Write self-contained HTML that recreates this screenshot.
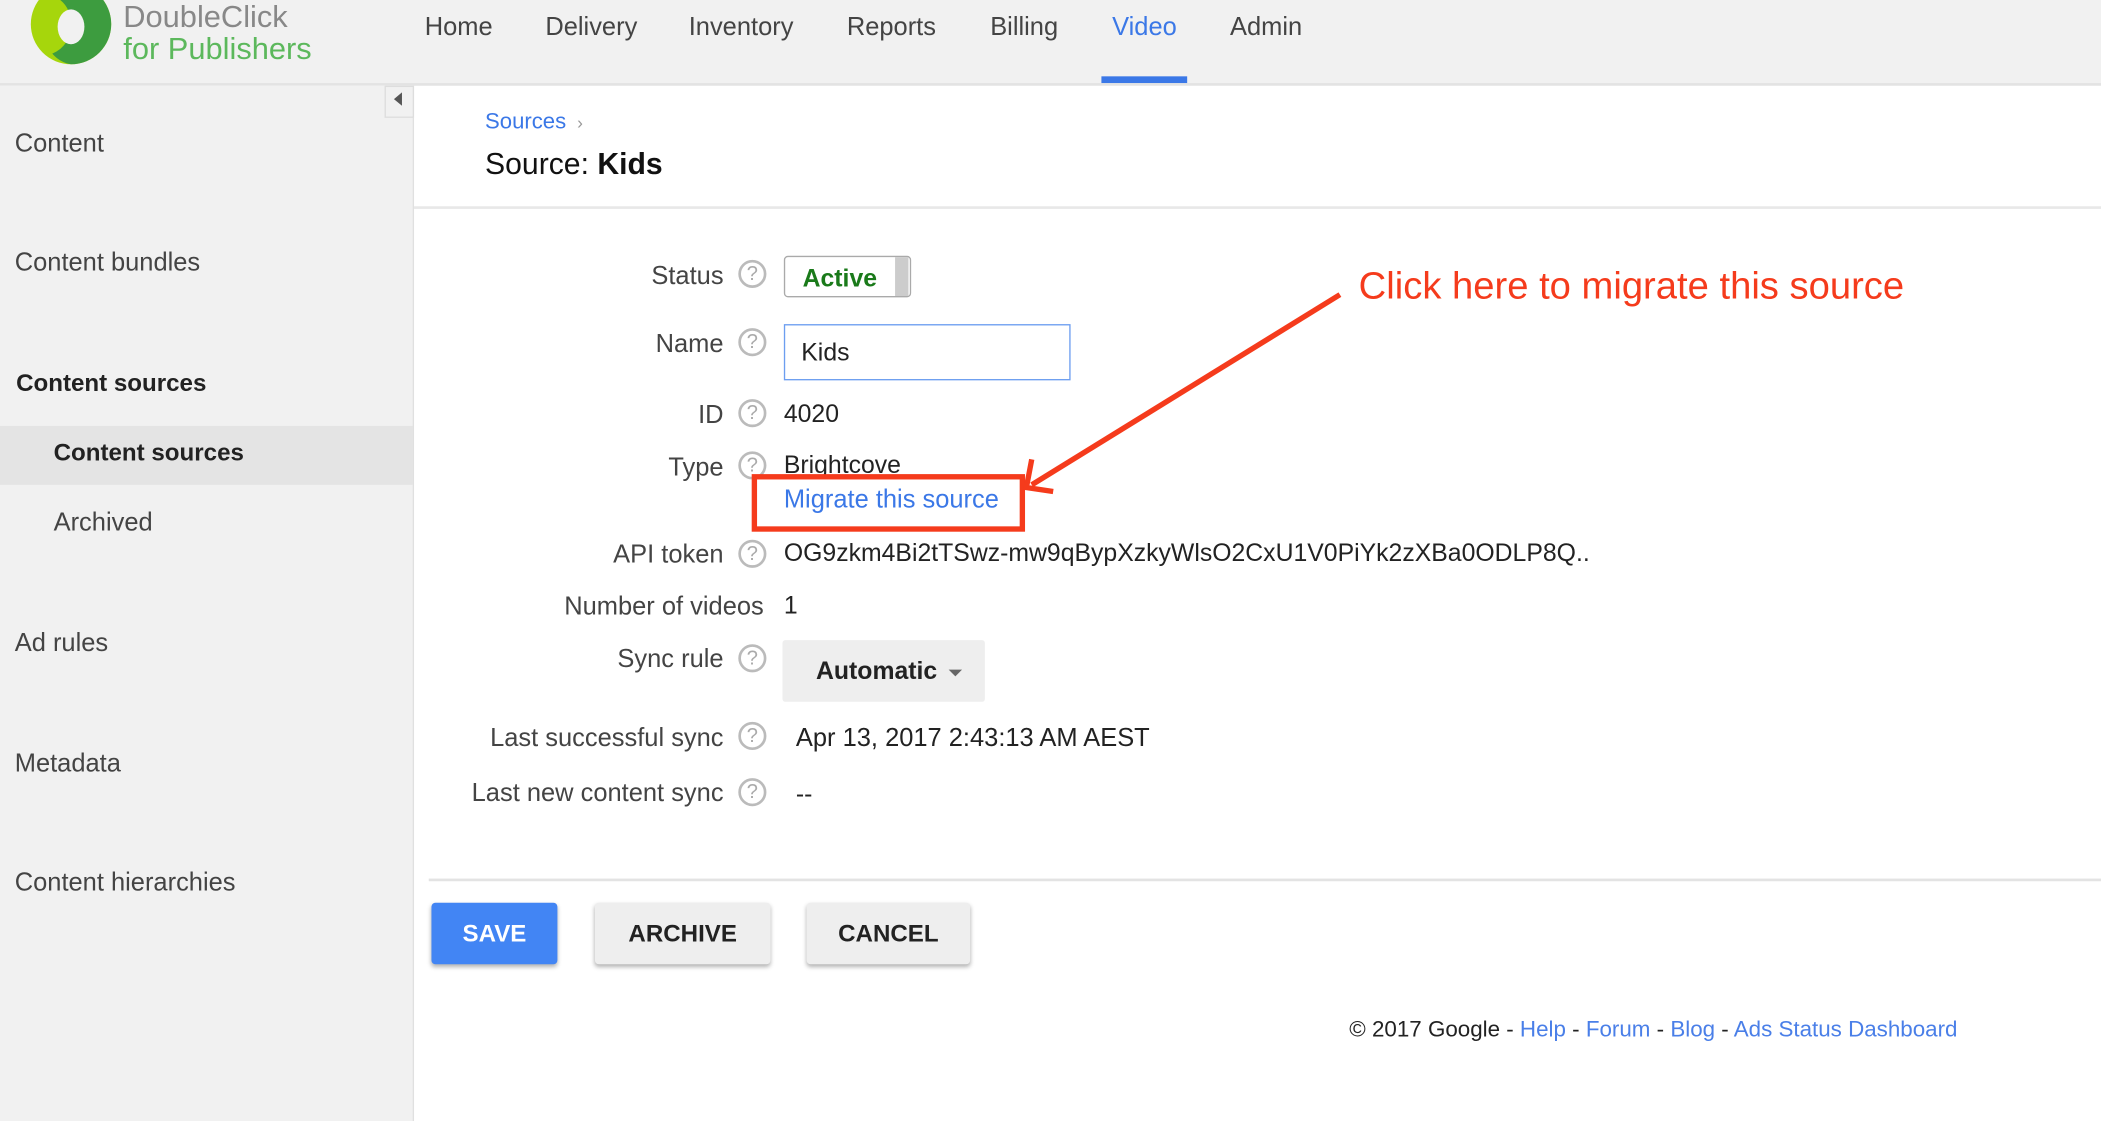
<!DOCTYPE html>
<html><head><meta charset="utf-8"><style>
html,body{margin:0;padding:0;width:2101px;height:1121px;overflow:hidden;background:#fff;font-family:"Liberation Sans",Arial,sans-serif}
#w{position:absolute;left:0;top:0;width:1568px;height:837px;transform:scale(1.33992,1.3393);transform-origin:0 0;background:#fff}
.a{position:absolute;white-space:nowrap}
.nav{font-size:19px;color:#444;top:10px}
.sb{font-size:19px;color:#444;left:11px}
.lb{font-size:19px;color:#444;text-align:right;right:1028px}
.v{font-size:18.5px;color:#222;left:585px}
.q{position:absolute;left:551px;width:17px;height:17px;border:2px solid #bbb;border-radius:50%;color:#aaa;font-size:15px;text-align:center;line-height:18px}
.btn{position:absolute;top:674px;height:46px;border-radius:3px;font-size:18px;font-weight:bold;text-align:center;line-height:46px;box-shadow:0 2px 3px rgba(0,0,0,.3)}
.lk{color:#4a7fe8}
</style></head><body><div id="w">
<div class="a" style="left:0;top:0;width:1568px;height:62px;background:#f1f1f1;border-bottom:2px solid #e3e3e3"></div>
<svg class="a" style="left:20px;top:-14px" width="66" height="64" viewBox="0 0 66 64"><circle cx="33" cy="32" r="30" fill="#a6d60c"/><path d="M33 2a30 30 0 0 1 0 60a24 24 0 0 1-14-8a22 22 0 0 0 14-22a22 22 0 0 0-8-18a24 24 0 0 1 8-12z" fill="#3d9c3f"/><ellipse cx="33" cy="34" rx="10" ry="13" fill="#f1f1f1"/></svg>
<div class="a" style="left:92px;top:0;font-size:23px;color:#888;line-height:24px">DoubleClick</div>
<div class="a" style="left:92px;top:24px;font-size:23px;color:#5cb85c;line-height:24px">for Publishers</div>
<div class="a nav" style="left:317px">Home</div>
<div class="a nav" style="left:407px">Delivery</div>
<div class="a nav" style="left:514px">Inventory</div>
<div class="a nav" style="left:632px">Reports</div>
<div class="a nav" style="left:739px">Billing</div>
<div class="a nav" style="left:830px;color:#3b78e7">Video</div>
<div class="a" style="left:822px;top:57px;width:64px;height:5px;background:#3b78e7"></div>
<div class="a nav" style="left:918px">Admin</div>

<div class="a" style="left:0;top:64px;width:308px;height:773px;background:#f1f1f1;border-right:1px solid #e0e0e0"></div>
<div class="a" style="left:287px;top:64px;width:20px;height:22px;border:1px solid #ddd;background:#f1f1f1"></div>
<div class="a" style="left:294px;top:69px;width:0;height:0;border-top:5px solid transparent;border-bottom:5px solid transparent;border-right:6px solid #555"></div>
<div class="a sb" style="top:97px">Content</div>
<div class="a sb" style="top:186px">Content bundles</div>
<div class="a sb" style="top:276px;left:12px;font-weight:bold;color:#222;font-size:18px">Content sources</div>
<div class="a" style="left:0;top:318px;width:308px;height:44px;background:#e4e4e4"></div>
<div class="a sb" style="top:328px;left:40px;font-weight:bold;color:#222;font-size:18px">Content sources</div>
<div class="a sb" style="top:380px;left:40px">Archived</div>
<div class="a sb" style="top:470px">Ad rules</div>
<div class="a sb" style="top:560px">Metadata</div>
<div class="a sb" style="top:649px">Content hierarchies</div>

<div class="a" style="left:362px;top:82px;font-size:16.5px;color:#3b78e7">Sources <span style="color:#999;font-size:13px">&nbsp;›</span></div>
<div class="a" style="left:362px;top:110px;font-size:22.5px;color:#111">Source: <b>Kids</b></div>
<div class="a" style="left:309px;top:154px;width:1259px;height:2px;background:#e8e8e8"></div>

<div class="a lb" style="top:196px">Status</div><div class="q" style="top:194px">?</div>
<div class="a" style="left:585px;top:191px;width:93px;height:29px;border:1px solid #aaa;border-radius:3px"></div>
<div class="a" style="left:668px;top:192px;width:10px;height:29px;background:#ccc"></div>
<div class="a" style="left:599px;top:197px;font-size:18.5px;font-weight:bold;color:#1a7a1a">Active</div>
<div class="a lb" style="top:247px">Name</div><div class="q" style="top:245px">?</div>
<div class="a" style="left:585px;top:242px;width:212px;height:40px;border:1px solid #6c9ef0"></div>
<div class="a v" style="left:598px;top:252px">Kids</div>
<div class="a lb" style="top:300px">ID</div><div class="q" style="top:298px">?</div>
<div class="a v" style="top:298px">4020</div>
<div class="a lb" style="top:339px">Type</div><div class="q" style="top:337px">?</div>
<div class="a v" style="top:336px">Brightcove</div>
<div class="a v" style="top:363px;color:#3b78e7;font-size:19px">Migrate this source</div>
<div class="a lb" style="top:404px">API token</div><div class="q" style="top:403px">?</div>
<div class="a v" style="top:402px">OG9zkm4Bi2tTSwz-mw9qBypXzkyWlsO2CxU1V0PiYk2zXBa0ODLP8Q..</div>
<div class="a lb" style="top:443px;right:998px">Number of videos</div>
<div class="a v" style="top:441px">1</div>
<div class="a lb" style="top:482px">Sync rule</div><div class="q" style="top:481px">?</div>
<div class="a" style="left:584px;top:478px;width:151px;height:46px;background:#eee;border-radius:2px"></div>
<div class="a" style="left:609px;top:490px;font-size:18.5px;font-weight:bold;color:#222">Automatic</div>
<div class="a" style="left:708px;top:500px;border-left:5px solid transparent;border-right:5px solid transparent;border-top:5px solid #666"></div>
<div class="a lb" style="top:541px">Last successful sync</div><div class="q" style="top:539px">?</div>
<div class="a v" style="left:594px;top:541px;font-size:19px">Apr 13, 2017 2:43:13 AM AEST</div>
<div class="a lb" style="top:582px">Last new content sync</div><div class="q" style="top:581px">?</div>
<div class="a v" style="left:594px;top:582px">--</div>

<div class="a" style="left:320px;top:656px;width:1248px;height:2px;background:#e3e3e3"></div>
<div class="btn" style="left:322px;width:94px;background:#4285f4;color:#fff">SAVE</div>
<div class="btn" style="left:444px;width:131px;background:#eee;color:#222">ARCHIVE</div>
<div class="btn" style="left:602px;width:122px;background:#eee;color:#222">CANCEL</div>

<div class="a" style="left:1007px;top:759px;font-size:16.7px;color:#222">© 2017 Google - <span class="lk">Help</span> - <span class="lk">Forum</span> - <span class="lk">Blog</span> - <span class="lk">Ads Status Dashboard</span></div>

<div class="a" style="left:1014px;top:198px;font-size:28.5px;color:#f53b1c">Click here to migrate this source</div>
<svg class="a" style="left:0;top:0" width="1568" height="837"><rect x="563" y="356" width="200" height="39" fill="none" stroke="#f53b1c" stroke-width="4"/><path d="M1000 220 L770 362" stroke="#f53b1c" stroke-width="4" fill="none"/><path d="M770 343 L766 364 L786 367" stroke="#f53b1c" stroke-width="4" fill="none"/></svg>
</div></body></html>
